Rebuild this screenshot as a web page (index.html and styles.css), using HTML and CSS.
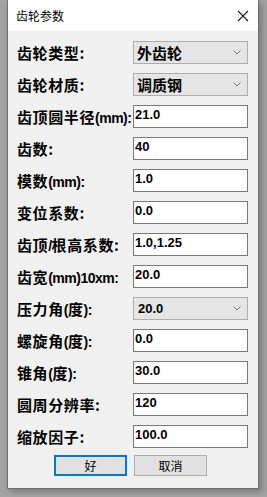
FILE: index.html
```html
<!DOCTYPE html>
<html lang="zh-CN">
<head>
    <meta charset="UTF-8">
    <title>齿轮参数</title>
    <link rel="stylesheet" href="styles.css">
</head>
<body>
    <div class="window">
        <div class="titlebar">
            <span class="title">齿轮参数</span>
            <svg class="close" width="12" height="12" viewBox="0 0 12 12">
                <path d="M1 1 L11 11 M11 1 L1 11" stroke="#1a1a1a" stroke-width="1.1" fill="none"/>
            </svg>
        </div>
        <div class="content">
            <div class="row">
                <label class="label">齿轮类型:</label>
                <div class="combo"><span>外齿轮</span><svg class="arrow" width="8" height="5" viewBox="0 0 8 5"><path d="M0.5 0.5 L4 4 L7.5 0.5" stroke="#6a6a6a" fill="none"/></svg></div>
            </div>
            <div class="row">
                <label class="label">齿轮材质:</label>
                <div class="combo"><span>调质钢</span><svg class="arrow" width="8" height="5" viewBox="0 0 8 5"><path d="M0.5 0.5 L4 4 L7.5 0.5" stroke="#6a6a6a" fill="none"/></svg></div>
            </div>
            <div class="row">
                <label class="label">齿顶圆半径<span class="latin">(mm):</span></label>
                <div class="textbox">21.0</div>
            </div>
            <div class="row">
                <label class="label">齿数:</label>
                <div class="textbox">40</div>
            </div>
            <div class="row">
                <label class="label">模数<span class="latin">(mm):</span></label>
                <div class="textbox">1.0</div>
            </div>
            <div class="row">
                <label class="label">变位系数:</label>
                <div class="textbox">0.0</div>
            </div>
            <div class="row">
                <label class="label">齿顶<span class="latin">/</span>根高系数:</label>
                <div class="textbox">1.0,1.25</div>
            </div>
            <div class="row">
                <label class="label">齿宽<span class="latin">(mm)10xm:</span></label>
                <div class="textbox">20.0</div>
            </div>
            <div class="row">
                <label class="label">压力角<span class="latin">(</span>度<span class="latin">):</span></label>
                <div class="combo"><span class="num">20.0</span><svg class="arrow" width="8" height="5" viewBox="0 0 8 5"><path d="M0.5 0.5 L4 4 L7.5 0.5" stroke="#6a6a6a" fill="none"/></svg></div>
            </div>
            <div class="row">
                <label class="label">螺旋角<span class="latin">(</span>度<span class="latin">):</span></label>
                <div class="textbox">0.0</div>
            </div>
            <div class="row">
                <label class="label">锥角<span class="latin">(</span>度<span class="latin">):</span></label>
                <div class="textbox">30.0</div>
            </div>
            <div class="row">
                <label class="label">圆周分辨率:</label>
                <div class="textbox">120</div>
            </div>
            <div class="row">
                <label class="label">缩放因子:</label>
                <div class="textbox">100.0</div>
            </div>
            <div class="buttons">
                <div class="button default">好</div>
                <div class="button">取消</div>
            </div>
        </div>
    </div>
</body>
</html>
```

FILE: styles.css
```css
body{
    margin: 0;
    background-color: #a3a3a3;
    width: 267px;
    height: 497px;
    overflow: hidden;
}

.window{
    margin-left: 7px;
    width: 250px;
    height: 488px;
    border: 1px solid #707070;
    border-top: none;
    background-color: #f0f0f0;
    box-shadow: 3px 3px 6px rgba(0, 0, 0, 0.25);
}

.titlebar{
    height: 31px;
    background-color: #ffffff;
    display: flex;
    align-items: center;
    justify-content: space-between;
    padding: 0 9px 0 8px;
}

.title{
    font-family: "Noto Sans CJK SC", sans-serif;
    font-size: 12px;
    color: #000;
}

.close{
    display: block;
}

.content{
    padding: 10px 10px 0 9px;
    display: flex;
    flex-direction: column;
    gap: 9px;
}

.row{
    display: grid;
    grid-template-columns: 1fr 115px;
    align-items: center;
    height: 23px;
}

.label{
    font-family: "Noto Sans CJK SC", sans-serif;
    font-weight: 700;
    font-size: 15px;
    letter-spacing: 0.6px;
    color: #000;
    white-space: nowrap;
}

.latin{
    font-family: "Liberation Sans", sans-serif;
    font-size: 14px;
    letter-spacing: -0.5px;
}

.combo{
    height: 23px;
    box-sizing: border-box;
    border: 1px solid #adadad;
    background-color: #e5e5e5;
    display: flex;
    align-items: center;
    justify-content: space-between;
    padding: 0 6px 0 3px;
    font-family: "Noto Sans CJK SC", sans-serif;
    font-weight: 700;
    font-size: 15px;
}

.combo .num{
    font-family: "Liberation Sans", sans-serif;
    font-size: 13px;
    padding-left: 1px;
}

.arrow{
    display: block;
}

.textbox{
    height: 23px;
    box-sizing: border-box;
    border: 1px solid #7a7a7a;
    background-color: #ffffff;
    font-family: "Liberation Sans", sans-serif;
    font-weight: 700;
    font-size: 13px;
    line-height: 17px;
    padding-left: 1px;
}

.buttons{
    display: flex;
    gap: 7px;
    margin-top: -2px;
    padding-left: 37px;
}

.button{
    width: 73px;
    height: 21px;
    box-sizing: border-box;
    border: 1px solid #adadad;
    background-color: #e1e1e1;
    font-family: "Noto Sans CJK SC", sans-serif;
    font-size: 12px;
    display: flex;
    align-items: center;
    justify-content: center;
}

.button.default{
    border: 2px solid #0078d7;
}
```
